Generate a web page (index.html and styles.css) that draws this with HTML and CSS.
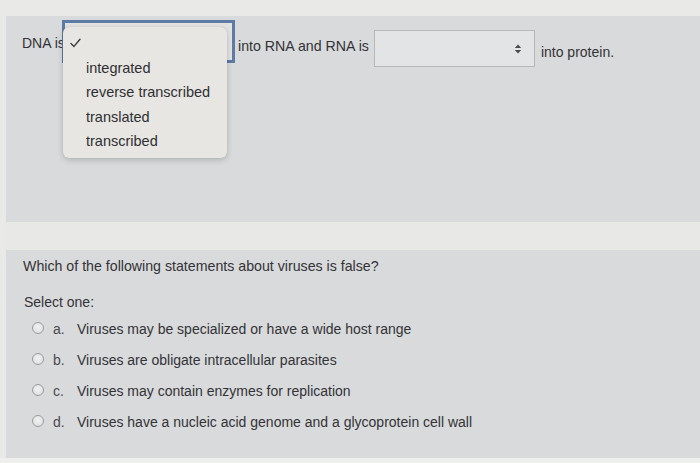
FILE: index.html
```html
<!DOCTYPE html>
<html lang="en">
<head>
<meta charset="utf-8">
<title>Quiz</title>
<link rel="stylesheet" href="styles.css">
</head>
<body>
<div class="page">
  <section class="panel panel-top">
    <div class="row">
      <span class="label">DNA is</span>
      <div class="select focused"></div>
      <span class="mid">into RNA and RNA is</span>
      <div class="select plain">
        <svg class="updown" width="8" height="10" viewBox="0 0 8 10"><path d="M4 0.5 L7.2 4 L0.8 4 Z M4 9.5 L7.2 6 L0.8 6 Z" fill="#4a4a4c"/></svg>
      </div>
      <span class="end">into protein.</span>
    </div>
    <div class="menu">
      <svg class="check" width="11" height="10" viewBox="0 0 11 10"><path d="M1 5.4 L4 8.4 L10 1.2" fill="none" stroke="#3a3a3c" stroke-width="1.4" stroke-linecap="round" stroke-linejoin="round"/></svg>
      <ul class="items">
        <li>integrated</li>
        <li>reverse transcribed</li>
        <li>translated</li>
        <li>transcribed</li>
      </ul>
    </div>
  </section>
  <div class="gap"></div>
  <section class="panel panel-bottom">
    <p class="question">Which of the following statements about viruses is false?</p>
    <p class="select-one">Select one:</p>
    <ul class="options">
      <li class="option"><span class="radio"></span><span class="letter">a.</span><span class="text">Viruses may be specialized or have a wide host range</span></li>
      <li class="option"><span class="radio"></span><span class="letter">b.</span><span class="text">Viruses are obligate intracellular parasites</span></li>
      <li class="option"><span class="radio"></span><span class="letter">c.</span><span class="text">Viruses may contain enzymes for replication</span></li>
      <li class="option"><span class="radio"></span><span class="letter">d.</span><span class="text">Viruses have a nucleic acid genome and a glycoprotein cell wall</span></li>
    </ul>
  </section>
</div>
</body>
</html>
```

FILE: styles.css
```css
html, body {
  margin: 0;
  padding: 0;
}
body {
  background: #efefed;
  font-family: "Liberation Sans", Arial, sans-serif;
  font-size: 14px;
  color: #333336;
  width: 700px;
  height: 463px;
  overflow: hidden;
}
.page {
  padding-top: 16px;
  padding-left: 6px;
  background: #e9e9e7;
  height: 442px;
}
.panel {
  background: #d9dadc;
  position: relative;
}
.panel-top {
  height: 206px;
}
.gap {
  height: 28px;
  background: #e8e9e6;
}
.panel-bottom {
  height: 208px;
  padding-left: 17px;
  padding-top: 8px;
  box-sizing: border-box;
}
.row {
  display: flex;
  align-items: flex-start;
  padding-left: 16px;
  line-height: 16px;
}
.label {
  width: 40px;
  white-space: nowrap;
  margin-top: 19px;
}
.select {
  box-sizing: border-box;
}
.select.focused {
  width: 173px;
  height: 43px;
  margin-top: 4px;
  border: 3px solid #5d7ba4;
  background: #e3e3e1;
}
.mid {
  margin-top: 22px;
  margin-left: 3px;
  white-space: nowrap;
  font-size: 14.2px;
}
.select.plain {
  width: 161px;
  height: 37px;
  margin-top: 14px;
  margin-left: 5px;
  border: 1px solid #b7b8b9;
  background: #e3e4e5;
  display: flex;
  align-items: center;
  justify-content: flex-end;
  padding-right: 12px;
}
.updown {
  display: block;
}
.end {
  margin-top: 28px;
  margin-left: 6px;
  white-space: nowrap;
}
.menu {
  position: absolute;
  left: 57px;
  top: 11px;
  width: 164px;
  height: 131px;
  background: #e7e6e2;
  border-radius: 6px;
  box-shadow: 0 2px 6px rgba(0, 0, 0, 0.18), 0 0 1px rgba(0, 0, 0, 0.2);
}
.check {
  position: absolute;
  left: 7px;
  top: 11px;
}
.items {
  list-style: none;
  margin: 0;
  padding: 29px 0 0 23px;
  line-height: 24.3px;
  color: #2f2f32;
  font-family: "Liberation Sans", Arial, sans-serif;
  font-size: 14.5px;
}
.question {
  margin: 0;
  line-height: 16px;
  font-size: 14.2px;
}
.select-one {
  margin: 20px 0 0 1px;
  line-height: 16px;
}
.options {
  list-style: none;
  margin: 3px 0 0 0;
  padding: 0 0 0 9px;
}
.option {
  display: flex;
  align-items: center;
  height: 31px;
  line-height: 16px;
}
.radio {
  box-sizing: border-box;
  width: 12px;
  height: 12px;
  border-radius: 50%;
  border: 1.5px solid #9a9b9e;
  background: radial-gradient(circle at 50% 40%, #f1f1f1, #dcdcdc);
  margin-top: -2px;
}
.letter {
  margin-left: 9px;
  width: 24px;
  color: #4a4a4d;
}
.text {
  white-space: nowrap;
}
```
